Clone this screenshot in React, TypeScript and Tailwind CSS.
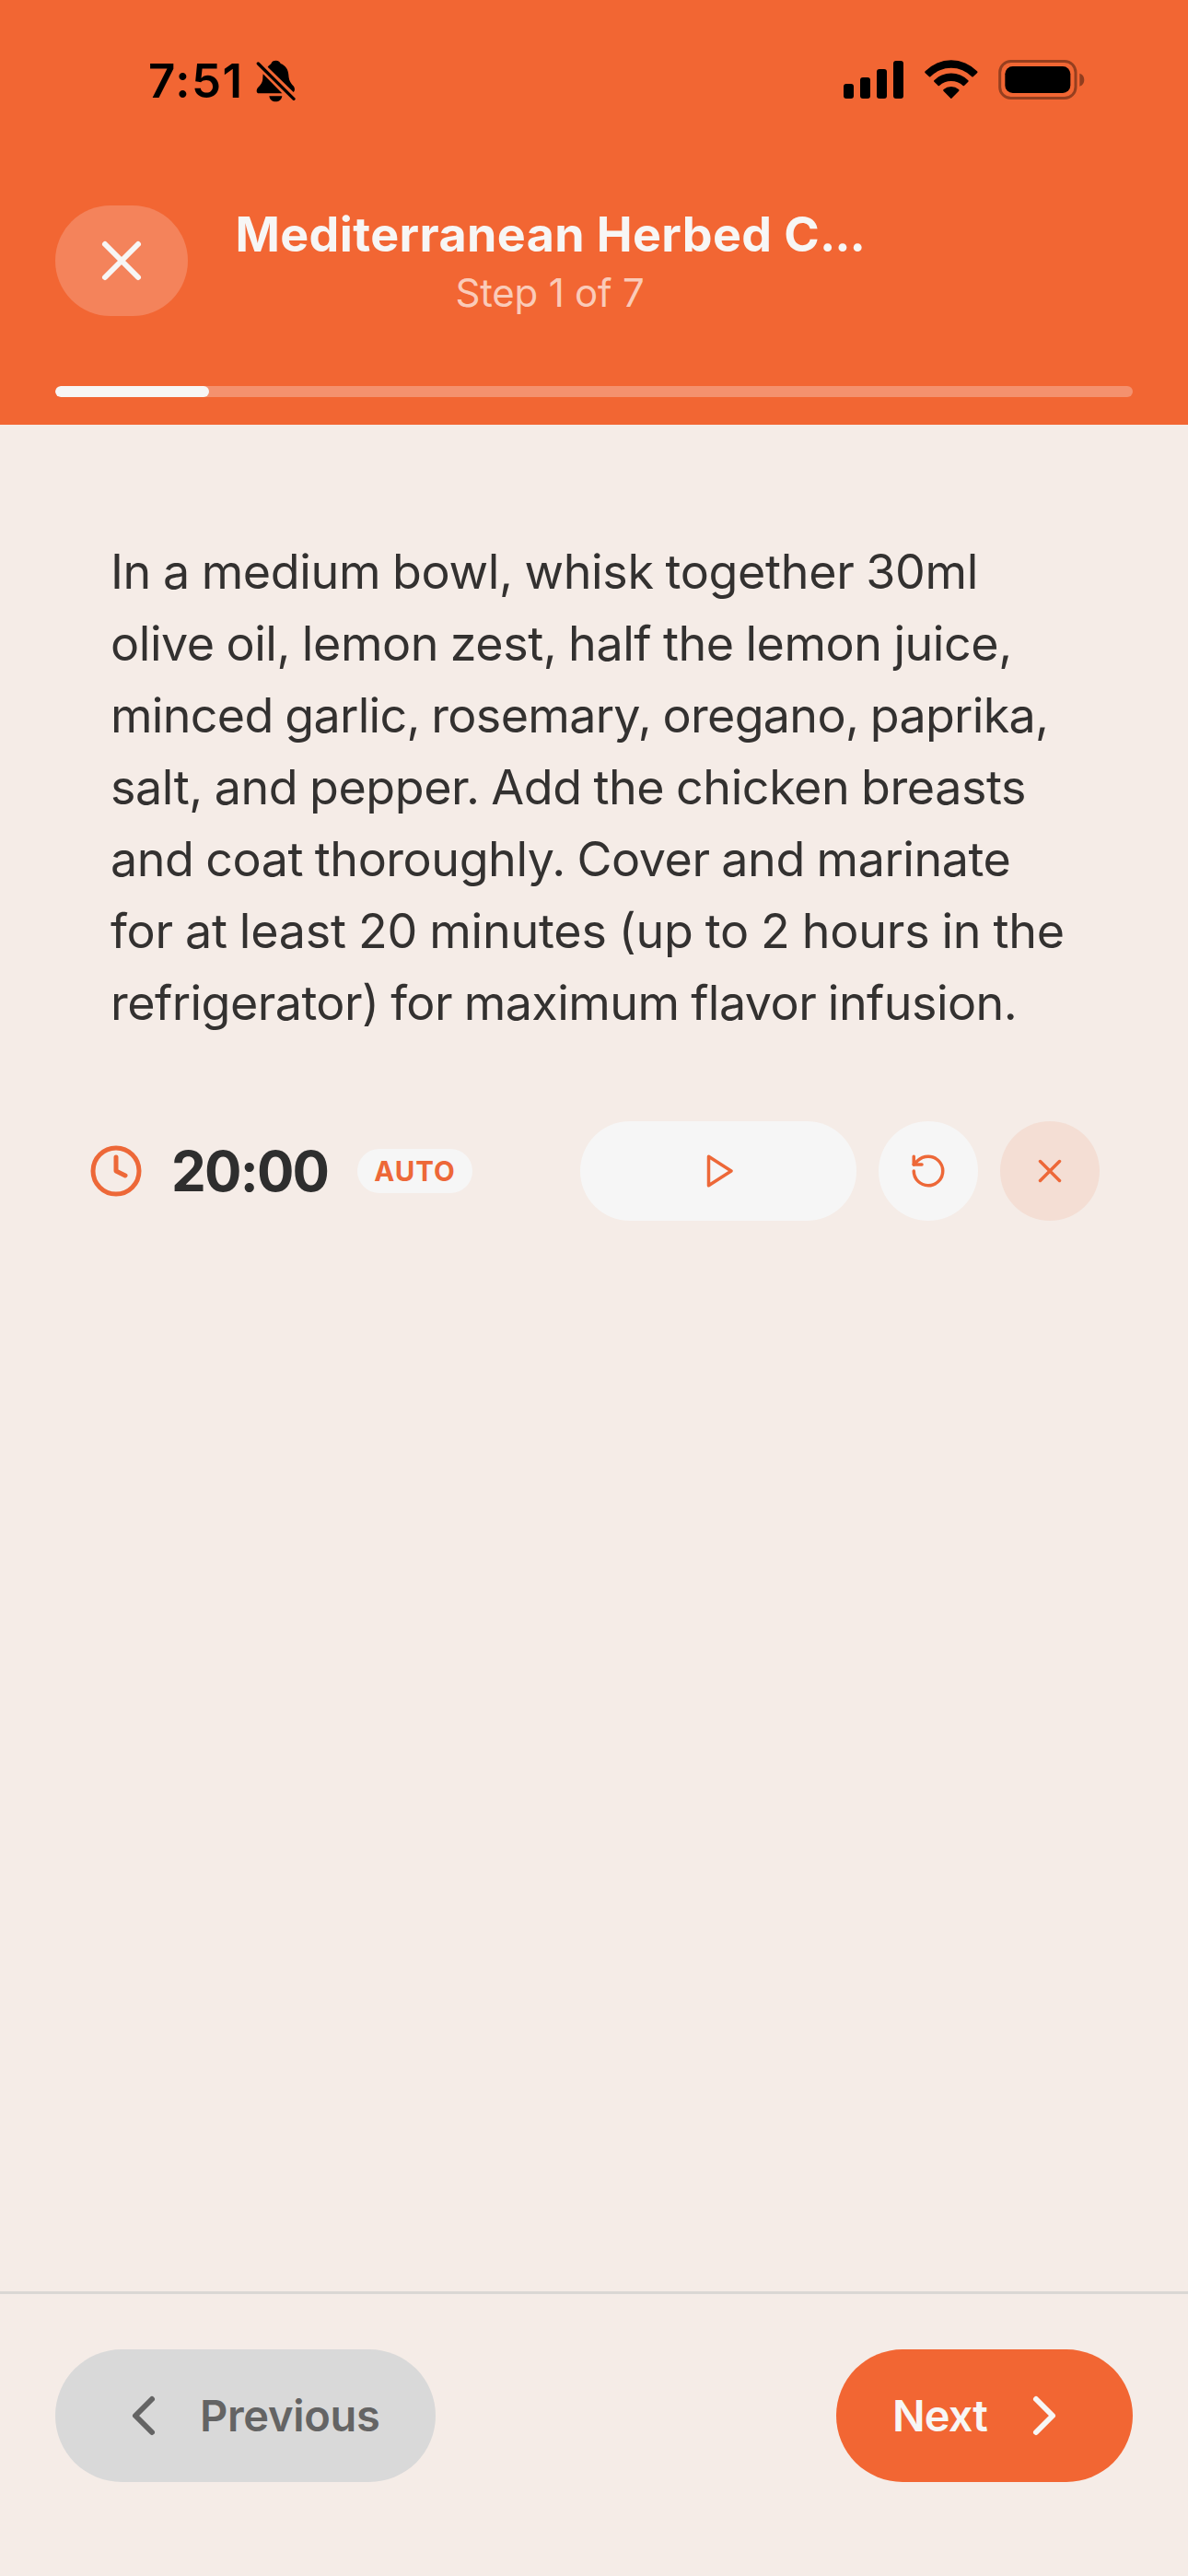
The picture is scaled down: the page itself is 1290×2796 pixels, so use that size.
import type { ReactNode } from 'react';

const lines = [
  { text: 'In a medium bowl, whisk together 30ml', tracking: 'tracking-[-0.34px]' },
  { text: 'olive oil, lemon zest, half the lemon juice,', tracking: 'tracking-[-0.44px]' },
  { text: 'minced garlic, rosemary, oregano, paprika,', tracking: 'tracking-[-0.68px]' },
  { text: 'salt, and pepper. Add the chicken breasts', tracking: 'tracking-[-0.42px]' },
  { text: 'and coat thoroughly. Cover and marinate', tracking: 'tracking-[-0.45px]' },
  { text: 'for at least 20 minutes (up to 2 hours in the', tracking: 'tracking-[-0.19px]' },
  { text: 'refrigerator) for maximum flavor infusion.', tracking: 'tracking-[-0.54px]' },
];

function Icon({ size, children }: { size: number; children: ReactNode }) {
  return (
    <svg
      width={size}
      height={size}
      viewBox="0 0 24 24"
      fill="none"
      stroke="currentColor"
      strokeWidth={2}
      strokeLinecap="round"
      strokeLinejoin="round"
      className="shrink-0"
    >
      {children}
    </svg>
  );
}

function BellOff() {
  return (
    <svg width="43" height="46" viewBox="414 75 129 138" className="shrink-0">
      <path d="M452 98C456 93 459 91 463 88C465 80 471 77 479 77C487 77 492 81 494 87C510 93 519 106 520 124C521 140 525 149 534 158C541 164 542 175 536 180Z" />
      <path d="M437 121L499 184H424C414 184 414 171 421 164C432 154 436 146 436 132Z" />
      <path d="M457 193H499C497 205 489 211 478 211C467 211 459 205 457 193Z" />
      <path d="M421 87L537 202" stroke="black" strokeWidth="10" strokeLinecap="round" />
    </svg>
  );
}

function StatusBar() {
  return (
    <div className="flex h-[176px] items-center justify-between pr-[112px] pl-[161px] text-black">
      <div className="flex items-center">
        <span className="w-[117px] text-[51px] leading-[60px] font-semibold tracking-[1.5px]">7:51</span>
        <BellOff />
      </div>
      <div className="flex items-start pb-[3px]">
        <svg width="65" height="41" viewBox="78 78 195 123" className="mt-px">
          <rect x="78" y="153" width="33" height="48" rx="9" />
          <rect x="132" y="132" width="33" height="69" rx="9" />
          <rect x="186" y="105" width="33" height="96" rx="9" />
          <rect x="240" y="78" width="33" height="123" rx="9" />
        </svg>
        <svg width="58" height="42" viewBox="341 75 174 126" className="ml-[23px]">
          <path d="M343 112A117 117 0 0 1 512 112Q515 115 512 118L499 130Q497 131 495 130A94 94 0 0 0 360 130Q358 131 356 130L343 118Q340 115 343 112Z" />
          <path d="M372 142A77 77 0 0 1 483 142Q485 144 483 146L470 159Q468 161 466 159A57 57 0 0 0 389 159Q387 161 385 159L372 146Q370 144 372 142Z" />
          <path d="M403 171A37 37 0 0 1 452 171Q455 174 452 177L429 200Q427.500 201.500 426 200L403 177Q400 174 403 171Z" />
        </svg>
        <svg width="94" height="43.330" viewBox="581 75 282 130" className="ml-[22px]">
          <rect x="586" y="79.500" width="247" height="120" rx="36" fill="none" stroke="black" strokeOpacity="0.38" strokeWidth="9" />
          <rect x="603" y="96" width="213" height="87" rx="25" />
          <path d="M846 119C856 122 861 130 861 140C861 150 856 158 846 161Z" fillOpacity="0.4" />
        </svg>
      </div>
    </div>
  );
}

export default function App() {
  return (
    <div className="flex h-[2796px] w-[1290px] flex-col overflow-hidden bg-[#f5ece7] font-['Inter',sans-serif] text-[#333130]">
      <header className="h-[461px] bg-[#f26633] text-[#f7f6f5]">
        <StatusBar />
        <div className="mt-[47px] flex h-[120px] items-center px-[60px]">
          <button className="flex h-[120px] w-[144px] items-center justify-center rounded-full bg-[#f4835b]">
            <Icon size={72}>
              <path d="M18 6 6 18M6 6l12 12" />
            </Icon>
          </button>
          <div className="ml-12 flex w-[690px] flex-col items-center gap-[6px] whitespace-nowrap">
            <h1 className="text-[52px] leading-[64px] font-bold tracking-[0.4px]">
              Mediterranean Herbed C<span className="tracking-[-1.2px]">...</span>
            </h1>
            <p className="text-[42px] leading-[50px] tracking-[-0.24px] text-[#facbb9]">Step 1 of 7</p>
          </div>
        </div>
        <div className="mx-[60px] mt-[76px] h-3 overflow-hidden rounded-full bg-[#f4916e]">
          <div className="h-full w-1/7 rounded-full bg-[#f7f6f5]" />
        </div>
      </header>

      <main className="flex-1 px-24 pt-[121px]">
        <p className="pl-6 text-[52px] leading-[78px] [word-spacing:-1.4px] whitespace-nowrap">
          {lines.map((line) => (
            <span key={line.text} className={`block ${line.tracking}`}>
              {line.text}
            </span>
          ))}
        </p>

        <div className="mt-[89px] flex h-[108px] items-center text-[#ed6838]">
          <Icon size={60}>
            <circle cx="12" cy="12" r="10" />
            <path d="M12 6v6l4 2" />
          </Icon>
          <span className="ml-[30px] w-[202px] text-[60px] leading-[60px] font-bold tracking-[-1.8px] text-[#2e2e2e]">20:00</span>
          <span className="flex h-12 w-[125px] items-center justify-center rounded-full bg-[#f6f6f6] text-[29.5px] leading-[48px] font-bold tracking-[1px]">
            AUTO
          </span>
          <div className="ml-auto flex gap-6">
            <button className="flex h-[108px] w-[300px] items-center justify-center rounded-full bg-[#f6f6f6]">
              <Icon size={42}>
                <path d="M6 3l14 9-14 9V3z" />
              </Icon>
            </button>
            <button className="flex size-[108px] items-center justify-center rounded-full bg-[#f6f6f6]">
              <Icon size={42}>
                <path d="M3 12a9 9 0 1 0 9-9 9.750 9.750 0 0 0-6.740 2.740L3 8" />
                <path d="M3 3v5h5" />
              </Icon>
            </button>
            <button className="flex size-[108px] items-center justify-center rounded-full bg-[#f4ded4]">
              <Icon size={42}>
                <path d="M18 6 6 18M6 6l12 12" />
              </Icon>
            </button>
          </div>
        </div>
      </main>

      <footer className="flex h-[309px] items-start justify-between border-t-[3px] border-[#dad7d4] px-[60px] pt-[60px] text-[47px] leading-[60px] font-semibold">
        <button className="flex h-36 w-[413px] items-center rounded-full bg-[#d9d9d9] pl-[60px] text-[#646464]">
          <Icon size={72}>
            <path d="m15 18-6-6 6-6" />
          </Icon>
          <span className="ml-[25px] tracking-[-0.3px]">Previous</span>
        </button>
        <button className="flex h-36 w-[322px] items-center justify-between rounded-full bg-[#f26633] pr-[60px] pl-[61px] text-[#f7f6f5]">
          <span className="tracking-[-0.9px]">Next</span>
          <Icon size={72}>
            <path d="m9 18 6-6-6-6" />
          </Icon>
        </button>
      </footer>
    </div>
  );
}
